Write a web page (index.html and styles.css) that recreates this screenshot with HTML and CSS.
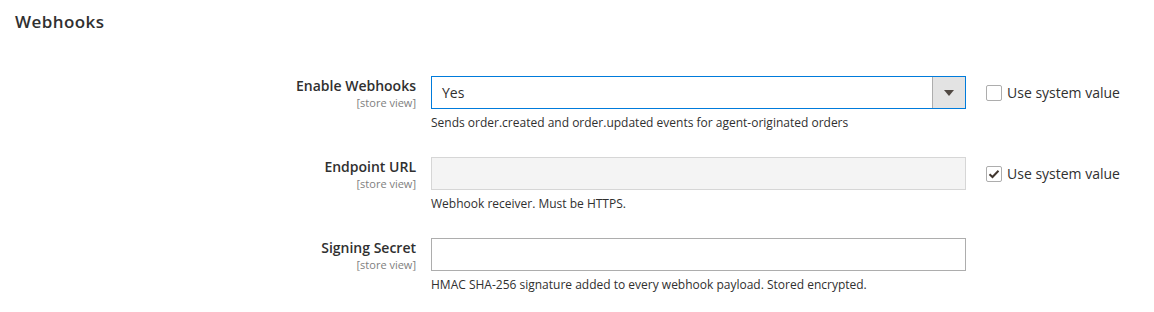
FILE: index.html
```html
<!DOCTYPE html>
<html>
<head>
    <title>Webhooks Configuration</title>
    <link rel="stylesheet" href="styles.css">
</head>
<body>
    <div class="section">
        <h2 class="section-title">Webhooks</h2>

        <div class="config-row">
            <div class="config-label">
                <label for="enable">Enable Webhooks</label>
                <span class="scope">[store view]</span>
            </div>
            <div class="config-value">
                <div class="select">
                    <span class="select-text">Yes</span>
                    <span class="select-btn"><span class="arrow"></span></span>
                </div>
                <p class="note">Sends order.created and order.updated events for agent-originated orders</p>
            </div>
            <div class="config-use">
                <span class="checkbox"></span>
                <span class="use-text">Use system value</span>
            </div>
        </div>

        <div class="config-row">
            <div class="config-label">
                <label for="endpoint">Endpoint URL</label>
                <span class="scope">[store view]</span>
            </div>
            <div class="config-value">
                <div class="input input-disabled" id="endpoint"></div>
                <p class="note">Webhook receiver. Must be HTTPS.</p>
            </div>
            <div class="config-use">
                <span class="checkbox checked">
                    <svg width="12" height="10" viewBox="0 0 12 10"><path d="M1.5 5.2 L4.5 8 L10.5 1.8" fill="none" stroke="#41362f" stroke-width="2"/></svg>
                </span>
                <span class="use-text">Use system value</span>
            </div>
        </div>

        <div class="config-row">
            <div class="config-label">
                <label for="secret">Signing Secret</label>
                <span class="scope">[store view]</span>
            </div>
            <div class="config-value">
                <div class="input" id="secret"></div>
                <p class="note">HMAC SHA-256 signature added to every webhook payload. Stored encrypted.</p>
            </div>
            <div class="config-use"></div>
        </div>
    </div>
</body>
</html>
```

FILE: styles.css
```css
body {
    margin: 0;
    font-family: 'Open Sans', 'Liberation Sans', sans-serif;
    color: #303030;
    background: #fff;
}

.section {
    padding: 12px 15px 0 15px;
}

.section-title {
    margin: 0 0 44px 0;
    font-size: 17px;
    line-height: 20px;
    font-weight: 600;
    letter-spacing: 0.025em;
    color: #303030;
}

.config-row {
    display: grid;
    grid-template-columns: 401px 535px auto;
    column-gap: 15px;
    margin-bottom: 26px;
}

.config-label {
    text-align: right;
}

.config-label label {
    display: block;
    font-size: 14px;
    line-height: 19px;
    font-weight: 600;
    color: #303030;
}

.scope {
    display: block;
    font-size: 11px;
    line-height: 15px;
    color: #808080;
}

.select {
    display: flex;
    height: 33px;
    box-sizing: border-box;
    border: 1px solid #007bdb;
    background: #fff;
}

.select-text {
    flex: 1;
    padding-left: 10px;
    font-size: 14px;
    line-height: 31px;
    color: #303030;
}

.select-btn {
    width: 32px;
    background: #e3e3e3;
    border-left: 1px solid #adadad;
    display: flex;
    align-items: center;
    justify-content: center;
}

.arrow {
    width: 0;
    height: 0;
    border-left: 5px solid transparent;
    border-right: 5px solid transparent;
    border-top: 6px solid #514943;
    margin-top: 1px;
}

.input {
    height: 33px;
    box-sizing: border-box;
    border: 1px solid #adadad;
    background: #fff;
}

.input-disabled {
    background: #f4f4f4;
    border-color: #d6d6d6;
}

.note {
    margin: 6px 0 0 0;
    font-size: 12px;
    line-height: 16px;
    color: #303030;
}

.config-use {
    display: flex;
    align-items: center;
    height: 33px;
    padding-left: 5px;
}

.checkbox {
    width: 14px;
    height: 14px;
    border: 1px solid #adadad;
    border-radius: 2px;
    background: #fff;
    display: flex;
    align-items: center;
    justify-content: center;
}

.use-text {
    margin-left: 5px;
    font-size: 14px;
    color: #303030;
}
```
